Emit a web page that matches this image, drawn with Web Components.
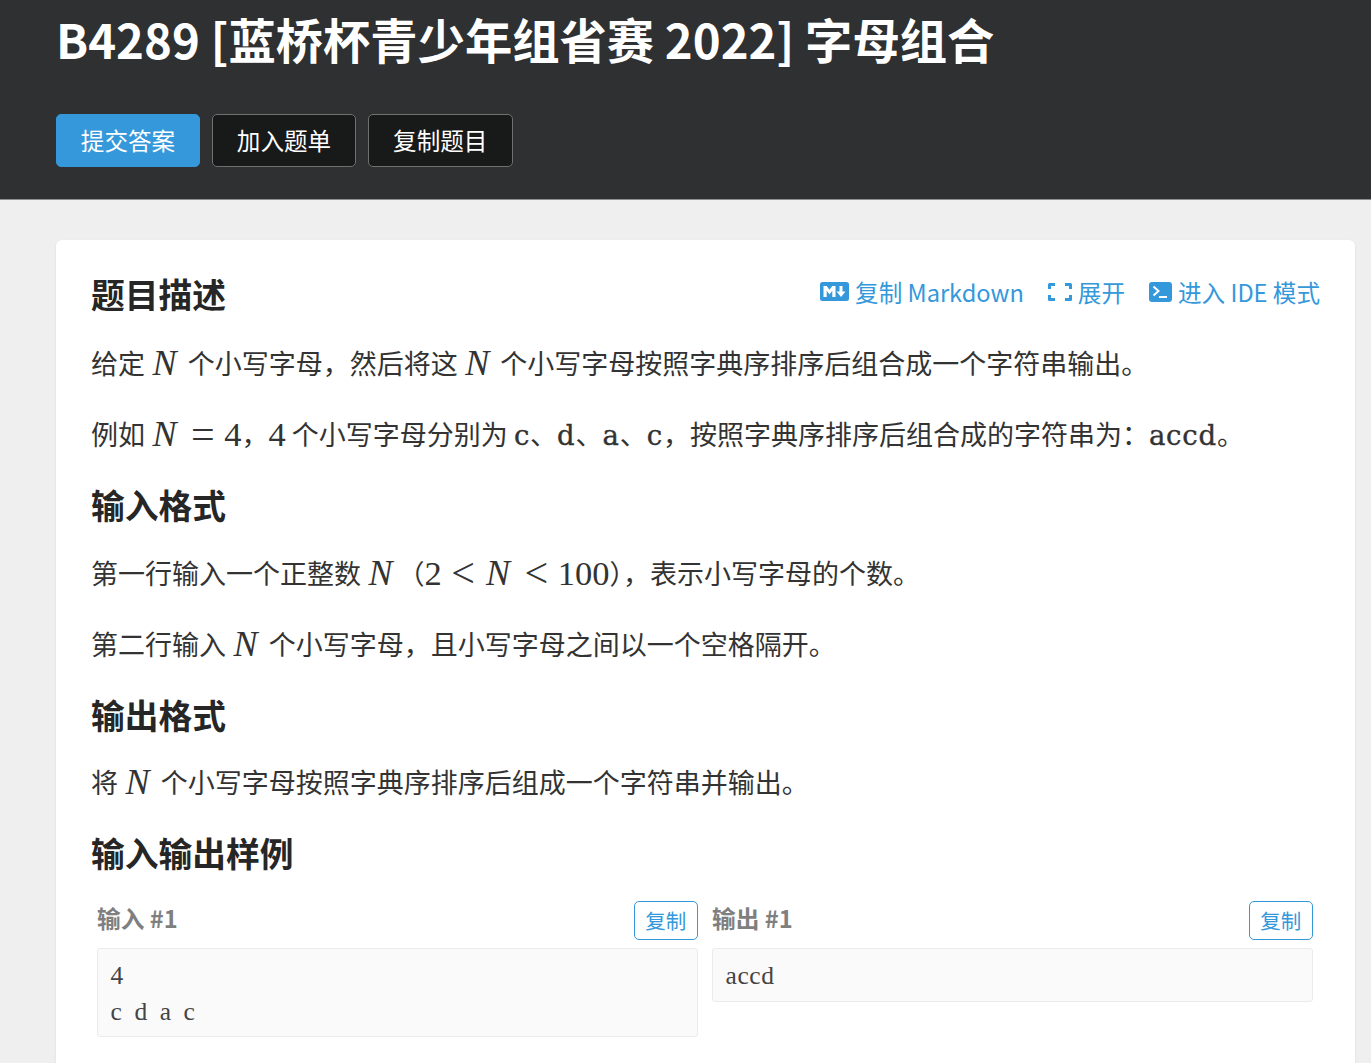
<!DOCTYPE html>
<html lang="zh">
<head>
<meta charset="utf-8">
<title>B4289 字母组合</title>
<style>
  html, body { margin: 0; padding: 0; }
  body {
    background: #efefef;
    font-family: "Noto Sans CJK SC", "Noto Sans", sans-serif;
    color: #262626;
    height: 1063px;
    overflow: hidden;
    text-autospace: no-autospace;
  }
</style>
</head>
<body>
<problem-header heading="B4289 [蓝桥杯青少年组省赛 2022] 字母组合">
  <action-button primary>提交答案</action-button>
  <action-button>加入题单</action-button>
  <action-button>复制题目</action-button>
</problem-header>

<problem-card>
  <card-title slot="title">题目描述</card-title>
  <tool-link slot="tools" icon="md">复制 Markdown</tool-link>
  <tool-link slot="tools" icon="expand">展开</tool-link>
  <tool-link slot="tools" icon="ide">进入 IDE 模式</tool-link>

  <text-line>给定 <math-n></math-n> 个小写字母，然后将这 <math-n></math-n> 个小写字母按照字典序排序后组合成一个字符串输出。</text-line>
  <text-line>例如 <math-n>N = 4</math-n>，<math-n>4</math-n> 个小写字母分别为 <inline-code>c</inline-code>、<inline-code>d</inline-code>、<inline-code>a</inline-code>、<inline-code>c</inline-code>，按照字典序排序后组合成的字符串为：<inline-code>accd</inline-code>。</text-line>

  <card-title>输入格式</card-title>
  <text-line>第一行输入一个正整数 <math-n></math-n>（<math-n>2 &lt; N &lt; 100</math-n>），表示小写字母的个数。</text-line>
  <text-line>第二行输入 <math-n></math-n> 个小写字母，且小写字母之间以一个空格隔开。</text-line>

  <card-title>输出格式</card-title>
  <text-line>将 <math-n></math-n> 个小写字母按照字典序排序后组成一个字符串并输出。</text-line>

  <card-title>输入输出样例</card-title>
  <sample-pair>
    <sample-box label="输入 #1">4
c d a c</sample-box>
    <sample-box label="输出 #1">accd</sample-box>
  </sample-pair>
</problem-card>

<script>
class ProblemHeader extends HTMLElement {
  constructor() {
    super();
    this.attachShadow({ mode: 'open' });
    this.shadowRoot.innerHTML = `
      <style>
        :host {
          display: block;
          box-sizing: border-box;
          height: 200px;
          padding: 0 56px;
          background: #2e3032;
          border-bottom: 1px solid #8e8e8e;
          color: #fff;
        }
        h1 {
          margin: 0;
          font-size: 47.3px;
          font-weight: 700;
          line-height: 77px;
          height: 114px;
          white-space: nowrap;
        }
        .actions { display: flex; gap: 11.75px; }
      </style>
      <h1></h1>
      <div class="actions"><slot></slot></div>
    `;
    this.shadowRoot.querySelector('h1').textContent = this.getAttribute('heading');
  }
}

class ActionButton extends HTMLElement {
  constructor() {
    super();
    this.attachShadow({ mode: 'open' });
    this.shadowRoot.innerHTML = `
      <style>
        :host {
          display: flex;
          align-items: center;
          justify-content: center;
          box-sizing: border-box;
          width: 144.5px;
          height: 53px;
          padding-bottom: 2px;
          font-size: 23.6px;
          color: #fff;
          background: #181919;
          border: 1.5px solid #707070;
          border-radius: 5px;
        }
        :host([primary]) { width: 144px; background: #3498db; border-color: #3498db; }
      </style>
      <slot></slot>
    `;
  }
}

class ProblemCard extends HTMLElement {
  constructor() {
    super();
    this.attachShadow({ mode: 'open' });
    this.shadowRoot.innerHTML = `
      <style>
        :host {
          display: block;
          box-sizing: border-box;
          margin: 40px 16px 0 56px;
          padding: 33px 35px 60px;
          background: #fff;
          border-radius: 6px;
          box-shadow: 0 1px 3px rgba(0, 0, 0, .08);
        }
        .top {
          display: flex;
          justify-content: space-between;
          align-items: center;
          height: 41px;
          margin-bottom: 29px;
        }
        .tools { display: flex; gap: 24px; margin-bottom: 4px; }
      </style>
      <div class="top">
        <slot name="title"></slot>
        <div class="tools"><slot name="tools"></slot></div>
      </div>
      <slot></slot>
    `;
  }
}

class CardTitle extends HTMLElement {
  constructor() {
    super();
    this.attachShadow({ mode: 'open' });
    this.shadowRoot.innerHTML = `
      <style>
        :host {
          display: block;
          font-size: 33.75px;
          font-weight: 700;
          line-height: 41px;
          margin-top: -1px;
          margin-bottom: 27.5px;
          color: #262626;
        }
        :host([slot="title"]) { margin: 0; }
      </style>
      <slot></slot>
    `;
  }
}

const TOOL_ICONS = {
  md: `<svg width="29" height="19" viewBox="0 0 29 19"><rect width="29" height="19" rx="2.5" fill="currentColor"/><path d="M3.500 15V4h3.200l2.800 3.800L12.300 4h3.200v11h-3.200V8.800l-2.800 3.600-2.800-3.600V15z" fill="#fff"/><path d="M19.500 4h3v5.500h3L21 15l-4.500-5.500h3z" fill="#fff"/></svg>`,
  expand: `<svg width="24" height="18" viewBox="0 0 24 18"><path d="M0 6V1.500A1.500 1.500 0 0 1 1.500 0H7v3H3v3zM24 6V1.500A1.500 1.500 0 0 0 22.500 0H17v3h4v3zM0 12v4.500A1.500 1.500 0 0 0 1.500 18H7v-3H3v-3zM24 12v4.500a1.500 1.500 0 0 1-1.500 1.500H17v-3h4v-3z" fill="currentColor"/></svg>`,
  ide: `<svg width="23" height="20" viewBox="0 0 23 20"><rect width="23" height="20" rx="3" fill="currentColor"/><path d="M4.500 4.500l5 4.500-5 4.500" fill="none" stroke="#fff" stroke-width="2"/><path d="M10 15h8" stroke="#fff" stroke-width="2"/></svg>`
};

class ToolLink extends HTMLElement {
  constructor() {
    super();
    this.attachShadow({ mode: 'open' });
    this.shadowRoot.innerHTML = `
      <style>
        :host {
          display: inline-flex;
          align-items: center;
          gap: 6px;
          font-size: 23.6px;
          line-height: 36px;
          color: #3498db;
          white-space: nowrap;
        }
        svg { display: block; }
      </style>
      ${TOOL_ICONS[this.getAttribute('icon')] || ''}
      <span><slot></slot></span>
    `;
  }
}

class TextLine extends HTMLElement {
  constructor() {
    super();
    this.attachShadow({ mode: 'open' });
    this.shadowRoot.innerHTML = `
      <style>
        :host {
          display: block;
          font-size: 27px;
          line-height: 40.5px;
          margin-bottom: 30.5px;
          color: #333;
          white-space: nowrap;
        }
      </style>
      <slot></slot>
    `;
  }
}

class MathN extends HTMLElement {
  constructor() {
    super();
    this.attachShadow({ mode: 'open' });
    // без текста внутри — просто переменная N
    const raw = this.textContent.trim() || 'N';
    const html = raw.split(' ').map(tok => {
      if (tok === 'N') return '<i>N</i>';
      if (tok === '=' || tok === '<') return `<span class="op">${tok === '<' ? '&lt;' : tok}</span>`;
      return tok;
    }).join('');
    // без пробелов вокруг: хост inline, они бы попали в строку
    this.shadowRoot.innerHTML = `<style>
        :host {
          display: inline;
          font-family: "Liberation Serif", "DejaVu Serif", serif;
          font-size: 34.5px;
          line-height: 0;
          vertical-align: -1px;
          color: #333;
        }
        i { font-size: 36px; padding: 0 5px 0 1.5px; }
        .op { font-size: 42px; padding: 0 9.5px; vertical-align: -2px; }
      </style>${html}`;
  }
}

class InlineCode extends HTMLElement {
  constructor() {
    super();
    this.attachShadow({ mode: 'open' });
    this.shadowRoot.innerHTML = `<style>
        :host {
          display: inline;
          font-family: "DejaVu Serif", "Liberation Mono", serif;
          font-size: 27.5px;
          letter-spacing: .8px;
          line-height: 0;
          -webkit-text-stroke: .4px #333;
          color: #333;
        }
      </style><slot></slot>`;
  }
}

class SamplePair extends HTMLElement {
  constructor() {
    super();
    this.attachShadow({ mode: 'open' });
    this.shadowRoot.innerHTML = `
      <style>
        :host {
          display: grid;
          grid-template-columns: 1fr 1fr;
          gap: 14px;
          align-items: start;
          margin: 0 7px 0 6px;
        }
      </style>
      <slot></slot>
    `;
  }
}

class SampleBox extends HTMLElement {
  constructor() {
    super();
    this.attachShadow({ mode: 'open' });
    this.shadowRoot.innerHTML = `
      <style>
        :host { display: block; min-width: 0; }
        .head {
          display: flex;
          justify-content: space-between;
          align-items: center;
          height: 39px;
          margin-bottom: 8px;
        }
        .label { font-size: 23.7px; font-weight: 700; color: #7f7f7f; padding-bottom: 5px; }
        .copy {
          box-sizing: border-box;
          height: 39px;
          padding: 0 10.75px 1px;
          display: flex;
          align-items: center;
          font-size: 20.5px;
          color: #3498db;
          border: 1.5px solid #3498db;
          border-radius: 5px;
        }
        pre {
          margin: 0;
          padding: 9.5px 12.5px 7px;
          font-family: "Liberation Serif", "Liberation Mono", serif;
          font-size: 25.5px;
          letter-spacing: .6px;
          word-spacing: 5px;
          line-height: 35.5px;
          color: #444;
          background: #fafafa;
          border: 1.5px solid #ebebeb;
          border-radius: 3px;
        }
      </style>
      <div class="head"><span class="label"></span><span class="copy">复制</span></div>
      <pre></pre>
    `;
    this.shadowRoot.querySelector('.label').textContent = this.getAttribute('label');
    this.shadowRoot.querySelector('pre').textContent = this.textContent;
  }
}

customElements.define('problem-header', ProblemHeader);
customElements.define('action-button', ActionButton);
customElements.define('problem-card', ProblemCard);
customElements.define('card-title', CardTitle);
customElements.define('tool-link', ToolLink);
customElements.define('text-line', TextLine);
customElements.define('math-n', MathN);
customElements.define('inline-code', InlineCode);
customElements.define('sample-pair', SamplePair);
customElements.define('sample-box', SampleBox);
</script>
</body>
</html>
